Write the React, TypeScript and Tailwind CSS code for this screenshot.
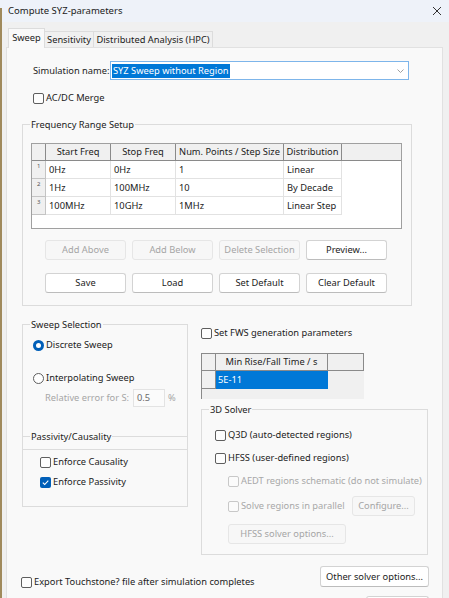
import React from "react";

const FONT = "font-['Noto_Sans',sans-serif] text-[9.3px] leading-none text-[#1b1b1b]";

function Check({ checked = false, disabled = false }: { checked?: boolean; disabled?: boolean }) {
  if (checked) {
    return (
      <span className="flex h-[11px] w-[11px] shrink-0 items-center justify-center rounded-[2px] bg-[#005fb8]">
        <svg width="9" height="9" viewBox="0 0 9 9">
          <path d="M1.8 4.7 L3.7 6.5 L7.3 2.6" fill="none" stroke="#ffffff" strokeWidth="1.1" />
        </svg>
      </span>
    );
  }
  return (
    <span
      className={
        disabled
          ? "block h-[11px] w-[11px] shrink-0 rounded-[2px] border border-[#c8c8c8] bg-[#fbfbfb]"
          : "block h-[11px] w-[11px] shrink-0 rounded-[2px] border border-[#5e5e5e] bg-[#fdfdfd]"
      }
    />
  );
}

function Radio({ checked = false }: { checked?: boolean }) {
  return checked ? (
    <span className="flex h-[11px] w-[11px] shrink-0 items-center justify-center rounded-full bg-[#005fb8]">
      <span className="block h-[5px] w-[5px] rounded-full bg-white" />
    </span>
  ) : (
    <span className="block h-[11px] w-[11px] shrink-0 rounded-full border border-[#5e5e5e] bg-white" />
  );
}

function Btn({ label, w, disabled = false, h = "h-[20px]" }: { label: string; w: string; disabled?: boolean; h?: string }) {
  return (
    <div
      className={`${w} ${h} flex shrink-0 items-center justify-center rounded-[3px] border ${
        disabled
          ? "border-[#e6e6e6] bg-[#f7f7f7] text-[#a5a5a5]"
          : "border-[#d3d3d3] border-b-[#bcbcbc] bg-white text-[#1b1b1b]"
      }`}
    >
      {label}
    </div>
  );
}

function Group({ title, className, children }: { title: string; className: string; children?: React.ReactNode }) {
  return (
    <div className={`relative border border-[#dcdcdc] ${className}`}>
      <span className="absolute left-[7px] top-[-7px] bg-[#f9f9f9] px-[1px] leading-[13px]">{title}</span>
      {children}
    </div>
  );
}

const headers = [
  { t: "Start Freq", w: "w-[65px]" },
  { t: "Stop Freq", w: "w-[65px]" },
  { t: "Num. Points / Step Size", w: "w-[108px]" },
  { t: "Distribution", w: "w-[58px]" },
];

const rows = [
  ["0Hz", "0Hz", "1", "Linear"],
  ["1Hz", "100MHz", "10", "By Decade"],
  ["100MHz", "10GHz", "1MHz", "Linear Step"],
];

export default function App() {
  return (
    <div className={`relative h-[598px] w-[449px] overflow-hidden bg-[#f0f0f0] ${FONT}`}>
      <div className="absolute bottom-0 left-0 top-[8px] w-[2px] bg-[#a08a5c]" />
      {/* Title bar */}
      <div className="flex h-[22px] items-center justify-between bg-[#eef2f9] pl-[8px] pr-[7px]">
        <span className="text-[9.5px]">Compute SYZ-parameters</span>
        <svg width="10" height="10" viewBox="0 0 10 10">
          <path d="M1 1 L9 9 M9 1 L1 9" stroke="#333" strokeWidth="1" />
        </svg>
      </div>
      {/* Tabs */}
      <div className="flex h-[25px] items-end pl-[8px]">
        <div className="relative z-10 mb-[-1px] flex h-[20px] w-[37px] items-center justify-center border border-b-0 border-[#dcdcdc] bg-[#f9f9f9] pb-[1px]">
          Sweep
        </div>
        <div className="flex h-[16px] w-[49px] items-center justify-center border border-b-0 border-l-0 border-[#dcdcdc] bg-[#f0f0f0]">
          Sensitivity
        </div>
        <div className="flex h-[16px] w-[119px] items-center justify-center border border-b-0 border-l-0 border-[#dcdcdc] bg-[#f0f0f0]">
          Distributed Analysis (HPC)
        </div>
      </div>
      {/* Panel */}
      <div className="ml-[6px] w-[437px] border border-[#e1e1e1] bg-[#f9f9f9] pb-[30px]">
        <div className="mt-[13px] flex h-[19px] items-center pl-[26px]">
          <span className="w-[77px]">Simulation name:</span>
          <div className="flex h-[19px] w-[299px] items-center justify-between border border-[#7db5ea] bg-white pl-[1px] pr-[3px]">
            <span className="bg-[#0078d7] px-[1px] leading-[14px] text-white">SYZ Sweep without Region</span>
            <svg width="9" height="6" viewBox="0 0 9 6">
              <path d="M1.5 1.5 L4.5 4.5 L7.5 1.5" fill="none" stroke="#a0a0a0" strokeWidth="1" />
            </svg>
          </div>
        </div>
        <div className="mt-[11px] flex h-[14px] items-center gap-[2px] pl-[26px]">
          <Check />
          <span>AC/DC Merge</span>
        </div>

        <Group title="Frequency Range Setup" className="ml-[15px] mt-[19px] h-[182px] w-[390px]">
          <div className="pl-[8px] pt-[18px]">
            <div className="h-[86px] w-[371px] border border-[#a0a0a0] bg-white">
              <div className="flex h-[17px]">
                <div className="w-[14px] border-b border-r border-[#8a8a8a] bg-[#f0f0f0]" />
                {headers.map((h) => (
                  <div
                    key={h.t}
                    className={`${h.w} flex items-center justify-center border-b border-r border-[#8a8a8a] bg-[#f0f0f0]`}
                  >
                    {h.t}
                  </div>
                ))}
                <div className="flex-1 border-b border-[#8a8a8a] bg-[#f0f0f0]" />
              </div>
              {rows.map((r, i) => (
                <div key={i} className="flex h-[18px]">
                  <div className="w-[14px] border-b border-r border-[#c4c4c4] bg-[#f0f0f0] pl-[5px] pt-[2px] text-[6px] text-[#555]">
                    {i + 1}
                  </div>
                  {r.map((c, j) => (
                    <div
                      key={j}
                      className={`${headers[j].w} flex items-center border-b border-r border-[#e2e2e2] pl-[3px]`}
                    >
                      {c}
                    </div>
                  ))}
                </div>
              ))}
            </div>
          </div>
          <div className="mt-[11px] flex gap-[6px] pl-[22px]">
            <Btn label="Add Above" w="w-[81px]" disabled />
            <Btn label="Add Below" w="w-[81px]" disabled />
            <Btn label="Delete Selection" w="w-[81px]" disabled />
            <Btn label="Preview..." w="w-[81px]" />
          </div>
          <div className="mt-[13px] flex gap-[6px] pl-[22px]">
            <Btn label="Save" w="w-[81px]" />
            <Btn label="Load" w="w-[81px]" />
            <Btn label="Set Default" w="w-[81px]" />
            <Btn label="Clear Default" w="w-[81px]" />
          </div>
        </Group>

        <div className="flex gap-[13px] pl-[15px]">
          {/* Left column */}
          <div className="w-[166px]">
            <Group title="Sweep Selection" className="mt-[18px] h-[126px] w-[166px]">
              <div className="mt-[13px] flex h-[14px] items-center gap-[2px] pl-[10px]">
                <Radio checked />
                <span>Discrete Sweep</span>
              </div>
              <div className="mt-[19px] flex h-[14px] items-center gap-[2px] pl-[10px]">
                <Radio />
                <span>Interpolating Sweep</span>
              </div>
              <div className="mt-[4px] flex h-[18px] items-center pl-[22px] text-[#a6a6a6]">
                <span className="w-[88px]">Relative error for S:</span>
                <div className="flex h-[18px] w-[32px] items-center border border-[#e3e3e3] bg-[#fbfbfb] pl-[3px] text-[#6a6a6a]">
                  0.5
                </div>
                <span className="ml-[3px]">%</span>
              </div>
            </Group>
            <Group title="Passivity/Causality" className="-mt-[14px] h-[71px] w-[166px]">
              <div className="mt-[18px] flex h-[14px] items-center gap-[2px] pl-[17px]">
                <Check />
                <span>Enforce Causality</span>
              </div>
              <div className="mt-[6px] flex h-[14px] items-center gap-[2px] pl-[17px]">
                <Check checked />
                <span>Enforce Passivity</span>
              </div>
            </Group>
          </div>
          {/* Right column */}
          <div className="w-[227px]">
            <div className="mt-[20px] flex h-[14px] items-center gap-[2px]">
              <Check />
              <span>Set FWS generation parameters</span>
            </div>
            <div className="mt-[13px] h-[46px] w-[163px] border-l border-t border-[#8a8a8a] bg-[#f0f0f0]">
              <div className="flex h-[17px]">
                <div className="w-[14px] border-b border-r border-[#8a8a8a]" />
                <div className="flex w-[112px] items-center justify-center border-b border-r border-[#8a8a8a]">
                  Min Rise/Fall Time / s
                </div>
                <div className="flex-1 border-b border-r border-[#8a8a8a]" />
              </div>
              <div className="flex h-[18px]">
                <div className="w-[14px] border-b border-r border-[#8a8a8a]" />
                <div className="flex w-[112px] items-center bg-[#0078d7] pl-[2px] text-white">5E-11</div>
              </div>
            </div>
            <Group title="3D Solver" className="mt-[10px] h-[146px] w-[227px]">
              <div className="mt-[18px] flex h-[14px] items-center gap-[2px] pl-[13px]">
                <Check />
                <span>Q3D (auto-detected regions)</span>
              </div>
              <div className="mt-[9px] flex h-[14px] items-center gap-[2px] pl-[13px]">
                <Check />
                <span>HFSS (user-defined regions)</span>
              </div>
              <div className="mt-[9px] flex h-[14px] items-center gap-[2px] pl-[26px] text-[#a8a8a8]">
                <Check disabled />
                <span>AEDT regions schematic (do not simulate)</span>
              </div>
              <div className="mt-[8px] flex h-[20px] items-center pl-[26px] text-[#a8a8a8]">
                <Check disabled />
                <span className="ml-[2px] w-[111px]">Solve regions in parallel</span>
                <Btn label="Configure..." w="w-[63px]" disabled />
              </div>
              <div className="mt-[8px] pl-[26px]">
                <Btn label="HFSS solver options..." w="w-[118px]" disabled />
              </div>
            </Group>
          </div>
        </div>

        <div className="mt-[11px] flex h-[21px] items-start justify-between pl-[14px] pr-[13px]">
          <div className="mt-[9px] flex h-[14px] items-center gap-[2px]">
            <Check />
            <span>Export Touchstone? file after simulation completes</span>
          </div>
          <Btn label="Other solver options..." w="w-[109px]" h="h-[21px]" />
        </div>
        <div className="mt-[9px] flex justify-end pr-[13px]">
          <Btn label="" w="w-[63px]" />
        </div>
      </div>
    </div>
  );
}
